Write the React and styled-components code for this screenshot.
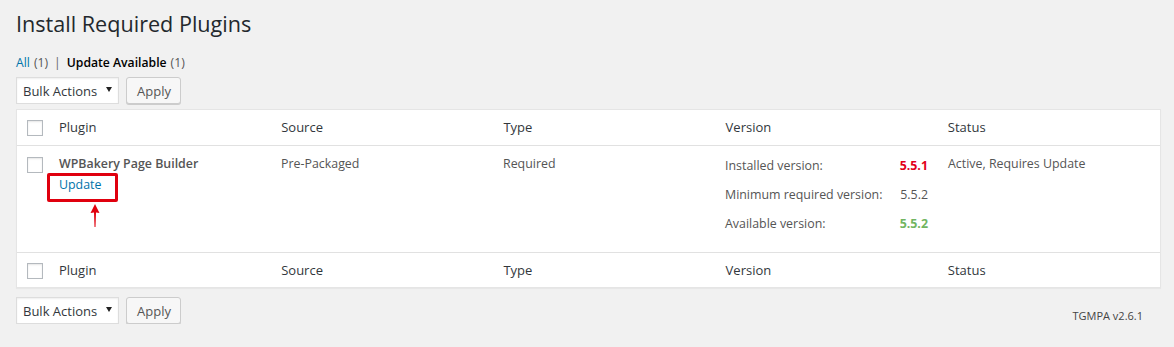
import React from 'react';
import styled, { createGlobalStyle } from 'styled-components';

const GlobalStyle = createGlobalStyle`
  html, body {
    margin: 0;
    padding: 0;
    background: #f1f1f1;
    font-family: 'Open Sans', 'Noto Sans', sans-serif;
    font-size: 12.4px;
    color: #444;
  }
`;

const Wrap = styled.div`
  padding: 0 13px 0 16px;
`;

const Title = styled.h1`
  margin: 0;
  padding: 9px 0 4px;
  font-size: 21.6px;
  font-weight: 400;
  line-height: 29px;
  color: #23282d;
`;

const Filters = styled.ul`
  list-style: none;
  margin: 11px 0 0;
  padding: 0;
  display: flex;
  font-size: 12.2px;
  line-height: 20px;
  color: #666;
`;

const FilterItem = styled.li`
  display: flex;
  gap: 4px;
  a {
    color: ${p => (p.$current ? '#000' : '#0073aa')};
    font-weight: ${p => (p.$current ? 600 : 400)};
    text-decoration: none;
  }
  span.count {
    color: #555;
  }
`;

const Sep = styled.span`
  margin: 0 6px;
  color: #666;
`;

const NavBar = styled.div`
  display: flex;
  gap: 7px;
  margin: ${p => p.$top ? '4px 0 5px' : '9px 0 0'};
  height: 27px;
  align-items: stretch;
`;

const Select = styled.div`
  width: 103px;
  box-sizing: border-box;
  background: #fff;
  border: 1px solid #ddd;
  box-shadow: inset 0 1px 2px rgba(0, 0, 0, 0.07);
  display: flex;
  align-items: center;
  justify-content: space-between;
  padding: 0 6px 0 6px;
  font-size: 13px;
  color: #32373c;
  &::after {
    content: '';
    border-left: 3px solid transparent;
    border-right: 3px solid transparent;
    border-top: 5px solid #222;
    margin-top: -2px;
  }
`;

const Button = styled.button`
  font-family: inherit;
  font-size: 13px;
  color: #555;
  background: #f7f7f7;
  border: 1px solid #ccc;
  border-radius: 3px;
  box-shadow: 0 1px 0 #ccc;
  padding: 0 10px;
  width: 55px;
  height: 27px;
`;

const Table = styled.div`
  background: #fff;
  border: 1px solid #e5e5e5;
  box-shadow: 0 1px 1px rgba(0, 0, 0, 0.04);
`;

const Row = styled.div`
  display: grid;
  grid-template-columns: 32px repeat(5, 1fr);
  border-top: ${p => (p.$lined ? '1px solid #e1e1e1' : 'none')};
  min-height: ${p => p.$h}px;
  box-sizing: border-box;
`;

const CheckCell = styled.div`
  padding: ${p => p.$pt}px 0 0 10px;
`;

const Check = styled.span`
  display: block;
  width: 16px;
  height: 16px;
  box-sizing: border-box;
  border: 1px solid #b4b9be;
  background: #fff;
  box-shadow: inset 0 1px 2px rgba(0, 0, 0, 0.1);
`;

const HeadCell = styled.div`
  padding: 8px 10px 0;
  font-size: 13px;
  line-height: 19px;
  color: #32373c;
`;

const Cell = styled.div`
  padding: 8px 10px 0;
  line-height: 20px;
  color: #555;
  position: relative;
`;

const PluginName = styled.strong`
  display: block;
  font-weight: 600;
  color: #555;
`;

const UpdateLink = styled.a`
  display: inline-block;
  margin-top: 1px;
  color: #0073aa;
  text-decoration: none;
`;

const Highlight = styled.span`
  position: absolute;
  left: -2px;
  top: 27px;
  width: 71px;
  height: 29px;
  box-sizing: border-box;
  border: 3px solid #e0000e;
  border-radius: 2px;
`;

const Arrow = styled.svg`
  position: absolute;
  left: 40px;
  top: 57px;
`;

const VersionTable = styled.div`
  display: grid;
  grid-template-columns: max-content 1fr;
  column-gap: 8px;
  row-gap: 9px;
  padding-top: 2px;
  width: 203px;
`;

const VLabel = styled.span`
  color: #555;
`;

const VValue = styled.span`
  text-align: right;
  color: ${p => p.$color || '#555'};
  font-weight: ${p => (p.$color ? 700 : 400)};
`;

const Footer = styled.div`
  display: flex;
  justify-content: space-between;
  align-items: flex-start;
`;

const Credit = styled.div`
  font-size: 11px;
  color: #444;
  margin: 20px 18px 0 0;
`;

const headers = ['Plugin', 'Source', 'Type', 'Version', 'Status'];

const HeaderRow = ({ lined }) => (
  <Row $h={35} $lined={lined}>
    <CheckCell $pt={10}><Check /></CheckCell>
    {headers.map(h => <HeadCell key={h}>{h}</HeadCell>)}
  </Row>
);

const Actions = ({ top }) => (
  <NavBar $top={top}>
    <Select>Bulk Actions</Select>
    <Button>Apply</Button>
  </NavBar>
);

export default function App() {
  return (
    <>
      <GlobalStyle />
      <Wrap>
        <Title>Install Required Plugins</Title>
        <Filters>
          <FilterItem>
            <a href="#">All</a><span className="count">(1)</span>
          </FilterItem>
          <Sep>|</Sep>
          <FilterItem $current>
            <a href="#">Update Available</a><span className="count">(1)</span>
          </FilterItem>
        </Filters>
        <Actions top />
        <Table>
          <HeaderRow />
          <Row $h={107} $lined>
            <CheckCell $pt={11}><Check /></CheckCell>
            <Cell>
              <PluginName>WPBakery Page Builder</PluginName>
              <UpdateLink href="#">Update</UpdateLink>
              <Highlight />
              <Arrow width="12" height="25" viewBox="0 0 12 25">
                <path d="M6 1 L1.5 10 L5 9.5 L5.5 24 L6.5 24 L7 9.5 L10.5 10 Z" fill="#e0000e" />
              </Arrow>
            </Cell>
            <Cell>Pre-Packaged</Cell>
            <Cell>Required</Cell>
            <Cell>
              <VersionTable>
                <VLabel>Installed version:</VLabel>
                <VValue $color="#e2001a">5.5.1</VValue>
                <VLabel>Minimum required version:</VLabel>
                <VValue>5.5.2</VValue>
                <VLabel>Available version:</VLabel>
                <VValue $color="#71b561">5.5.2</VValue>
              </VersionTable>
            </Cell>
            <Cell>Active, Requires Update</Cell>
          </Row>
          <HeaderRow lined />
        </Table>
        <Footer>
          <Actions />
          <Credit>TGMPA v2.6.1</Credit>
        </Footer>
      </Wrap>
    </>
  );
}
